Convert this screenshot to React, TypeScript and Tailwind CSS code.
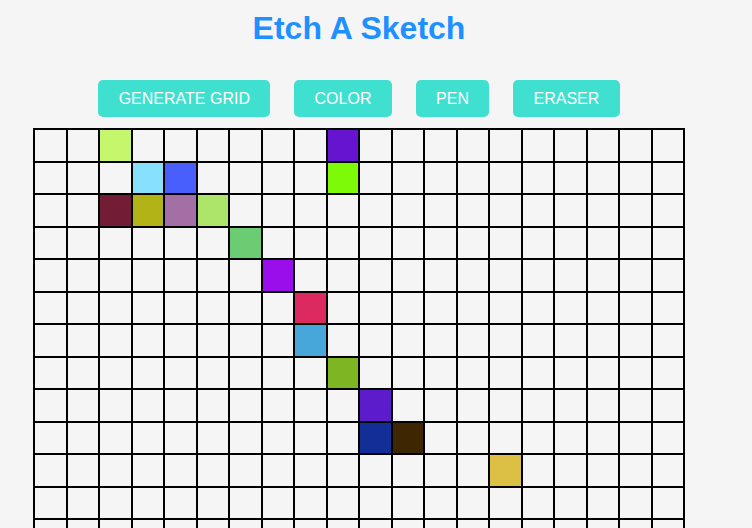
import React from "react";

const painted: Record<string, string> = {
  "0-2": "#c4f76c",
  "0-9": "#6614cf",
  "1-3": "#87e0fe",
  "1-4": "#4a5efe",
  "1-9": "#7cfa07",
  "2-2": "#721c35",
  "2-3": "#b1b316",
  "2-4": "#a36fa5",
  "2-5": "#ade56a",
  "3-6": "#6ccc74",
  "4-7": "#9a0eec",
  "5-8": "#dc2a60",
  "6-8": "#47a6da",
  "7-9": "#7eb522",
  "8-10": "#5c1ccb",
  "9-10": "#122f97",
  "9-11": "#3d2600",
  "10-14": "#dcc043",
};

export default function App() {
  const cells = [];
  for (let r = 0; r < 20; r++) {
    for (let c = 0; c < 20; c++) {
      const col = painted[`${r}-${c}`];
      cells.push(
        <div
          key={`${r}-${c}`}
          className="h-[32.5px] border border-black bg-[#f5f5f5]"
          style={col ? { backgroundColor: col } : undefined}
        />
      );
    }
  }
  return (
    <div className="min-h-screen bg-[#f5f5f5] font-['Liberation_Sans',Arial,sans-serif]">
      <div className="w-[718px] flex flex-col items-center pt-[10px]">
        <h1 className="text-[32px] leading-[37px] font-bold text-[#1e90ff]">Etch A Sketch</h1>
        <div className="mt-[33px] flex gap-6">
          <button className="h-[37px] px-[20.3px] rounded-[5px] bg-[#40e0d0] text-white text-base uppercase">Generate Grid</button>
          <button className="h-[37px] px-[20.3px] rounded-[5px] bg-[#40e0d0] text-white text-base uppercase">Color</button>
          <button className="h-[37px] px-[20.3px] rounded-[5px] bg-[#40e0d0] text-white text-base uppercase">Pen</button>
          <button className="h-[37px] px-[20.3px] rounded-[5px] bg-[#40e0d0] text-white text-base uppercase">Eraser</button>
        </div>
        <div className="mt-[11px] w-[652px] border border-black grid grid-cols-20">
          {cells}
        </div>
      </div>
    </div>
  );
}
